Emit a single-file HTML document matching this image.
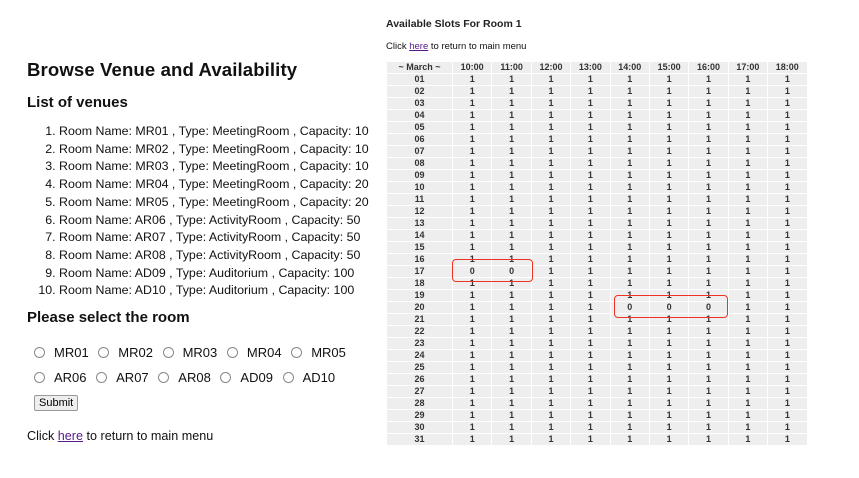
<!DOCTYPE html>
<html><head><meta charset="utf-8"><style>
body{margin:0;width:859px;height:478px;background:#fff;font-family:"Liberation Sans",sans-serif;color:#111;position:relative;overflow:hidden}
.a{position:absolute;white-space:nowrap}
h1{position:absolute;left:27px;top:59px;margin:0;font-size:18.6px;font-weight:bold;letter-spacing:0.1px}
.h2{font-size:15px;font-weight:bold}
ol{position:absolute;left:27px;top:123px;margin:0;padding-left:32px;font-size:12.4px;line-height:17.7px}
a{color:#551a8b}
.r{display:inline-block;width:9px;height:9px;border:1px solid #888;border-radius:50%;margin:0 9px 0 6px;vertical-align:-1px}
table{position:absolute;left:386px;top:61px;border-collapse:collapse;font-size:9px;font-weight:bold;color:#333}
td{background:#eee;border:1px solid #fff;height:11px;padding:0;text-align:center;width:38.4px;line-height:11px}
td:first-child{width:65px}
.box{position:absolute;border:1.5px solid #e32;border-radius:4px}
button{position:absolute;left:34px;top:395px;font-size:11px;padding:1px 4px;border:1px solid #999;border-radius:2px;background:#eee;font-family:"Liberation Sans",sans-serif}
</style></head><body>
<h1>Browse Venue and Availability</h1>
<div class="a h2" style="left:27px;top:94px">List of venues</div>
<ol>
<li>Room Name: MR01 , Type: MeetingRoom , Capacity: 10</li>
<li>Room Name: MR02 , Type: MeetingRoom , Capacity: 10</li>
<li>Room Name: MR03 , Type: MeetingRoom , Capacity: 10</li>
<li>Room Name: MR04 , Type: MeetingRoom , Capacity: 20</li>
<li>Room Name: MR05 , Type: MeetingRoom , Capacity: 20</li>
<li>Room Name: AR06 , Type: ActivityRoom , Capacity: 50</li>
<li>Room Name: AR07 , Type: ActivityRoom , Capacity: 50</li>
<li>Room Name: AR08 , Type: ActivityRoom , Capacity: 50</li>
<li>Room Name: AD09 , Type: Auditorium , Capacity: 100</li>
<li>Room Name: AD10 , Type: Auditorium , Capacity: 100</li>
</ol>
<div class="a h2" style="left:27px;top:309px">Please select the room</div>
<div class="a" style="left:28px;top:345px;font-size:13px"><span class="r"></span>MR01 <span class="r"></span>MR02 <span class="r"></span>MR03 <span class="r"></span>MR04 <span class="r"></span>MR05</div>
<div class="a" style="left:28px;top:370px;font-size:13px"><span class="r"></span>AR06 <span class="r"></span>AR07 <span class="r"></span>AR08 <span class="r"></span>AD09 <span class="r"></span>AD10</div>
<button>Submit</button>
<div class="a" style="left:27px;top:429px;font-size:12.6px">Click <a href="#">here</a> to return to main menu</div>
<div class="a" style="left:386px;top:18px;font-size:10.5px;font-weight:bold;color:#222">Available Slots For Room 1</div>
<div class="a" style="left:386px;top:41px;font-size:9.5px">Click <a href="#">here</a> to return to main menu</div>
<table id="t"></table>
<div class="box" style="left:452px;top:259px;width:79px;height:21px"></div>
<div class="box" style="left:614px;top:295px;width:112px;height:21px"></div>
<script>
var h='<tr><td>~ March ~</td>';
for(var c=10;c<=18;c++)h+='<td>'+c+':00</td>';
h+='</tr>';
for(var d=1;d<=31;d++){h+='<tr><td>'+(d<10?'0':'')+d+'</td>';
for(var c=10;c<=18;c++){var v=1;if(d==17&&c<=11)v=0;if(d==20&&c>=14&&c<=16)v=0;h+='<td>'+v+'</td>';}
h+='</tr>';}
document.getElementById('t').innerHTML=h;
</script>
</body></html>
